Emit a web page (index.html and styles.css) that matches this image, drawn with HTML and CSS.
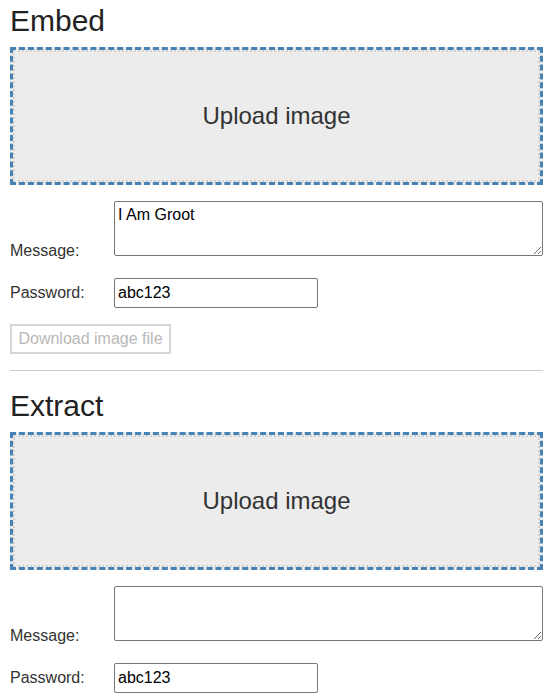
FILE: index.html
```html
<!DOCTYPE html>
<html>
<head>
<meta charset="utf-8">
<link rel="stylesheet" href="styles.css">
</head>
<body>
<section class="panel">
  <h1 class="title">Embed</h1>
  <div class="drop"><div class="drop-inner">Upload image</div></div>
  <div class="row row-msg">
    <label class="lbl">Message:</label>
    <textarea class="msg">I Am Groot</textarea>
  </div>
  <div class="row row-pw">
    <label class="lbl">Password:</label>
    <input class="pw" type="text" value="abc123">
  </div>
  <button class="dl" disabled>Download image file</button>
</section>
<hr class="sep">
<section class="panel">
  <h1 class="title">Extract</h1>
  <div class="drop"><div class="drop-inner">Upload image</div></div>
  <div class="row row-msg">
    <label class="lbl">Message:</label>
    <textarea class="msg"></textarea>
  </div>
  <div class="row row-pw">
    <label class="lbl">Password:</label>
    <input class="pw" type="text" value="abc123">
  </div>
</section>
</body>
</html>
```
FILE: styles.css
```css
html, body {
  margin: 0;
  padding: 0;
  background: #fff;
}
body {
  padding: 0 10px;
  font-family: "Liberation Sans", Arial, sans-serif;
  color: #333;
  font-size: 16px;
  overflow: hidden;
}
.panel {
  display: flex;
  flex-direction: column;
  align-items: flex-start;
}
.title {
  font-size: 30px;
  font-weight: normal;
  line-height: 33px;
  margin: 4px 0 10px;
  color: #222;
}
.drop {
  align-self: stretch;
  border: 3px dashed #4682b4;
  box-sizing: border-box;
  height: 138px;
  background: #ececec;
}
.drop-inner {
  height: 100%;
  box-sizing: border-box;
  border: 2px dotted #d2d2d2;
  display: flex;
  align-items: center;
  justify-content: center;
  font-size: 24px;
  color: #333;
}
.row {
  display: flex;
  align-self: stretch;
}
.row-msg {
  margin-top: 16px;
  align-items: flex-end;
}
.row-pw {
  margin-top: 22px;
  align-items: center;
}
.lbl {
  width: 104px;
  flex: none;
  line-height: 18px;
}
.row-msg .lbl {
  margin-bottom: -4px;
}
.msg {
  width: 429px;
  height: 55px;
  box-sizing: border-box;
  margin: 0;
  border: 1px solid #767676;
  border-radius: 2px;
  font-family: "Liberation Sans", Arial, sans-serif;
  font-size: 16px;
  color: #000;
  padding: 4px 3px 2px;
  resize: vertical;
}
.pw {
  width: 204px;
  height: 30px;
  box-sizing: border-box;
  margin: 0;
  border: 1px solid #767676;
  border-radius: 2px;
  font-family: "Liberation Sans", Arial, sans-serif;
  font-size: 16px;
  color: #000;
  padding: 1px 3px;
}
.dl {
  margin-top: 16px;
  width: 161px;
  height: 30px;
  box-sizing: border-box;
  border: 2px solid #d6d6d6;
  background: #fff;
  color: #b8b8b8;
  font-family: "Liberation Sans", Arial, sans-serif;
  font-size: 16px;
  padding: 0 6px;
  text-align: center;
}
.sep {
  border: 0;
  border-top: 1px solid #ccc;
  margin: 16px 0 14px;
}
```
